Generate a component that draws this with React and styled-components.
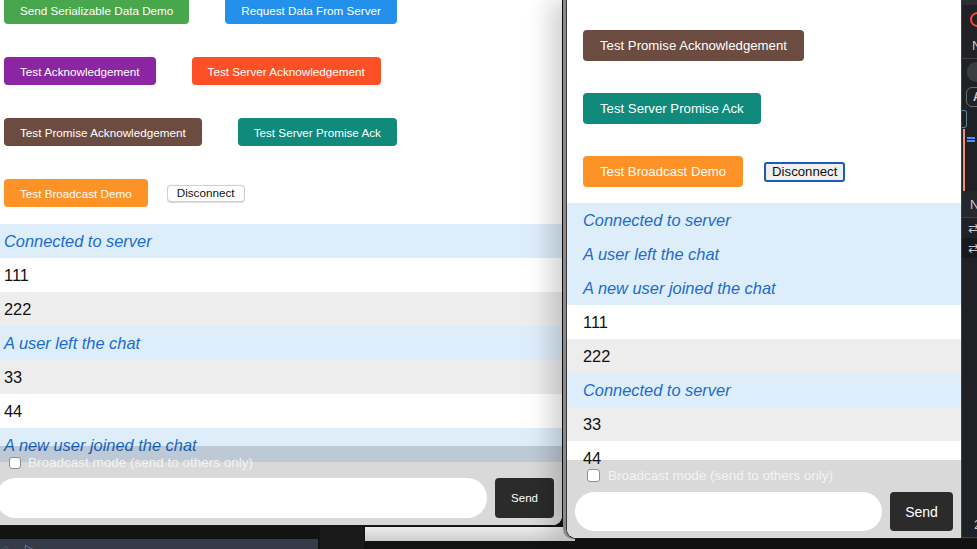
import React from 'react';
import styled, { createGlobalStyle } from 'styled-components';

const GlobalStyle = createGlobalStyle`
  html, body {
    margin: 0;
    padding: 0;
    overflow: hidden;
    background: #121212;
  }
  body {
    font-family: "Liberation Sans", Arial, sans-serif;
  }
`;

// sizes for the two browser windows (left one renders a bit smaller)
const sizes = {
  sm: {
    btnFont: 11.7, btnHeight: 28, btnPad: 16, rowGap: 33, controlsBottom: 17,
    discFont: 11.7, discHeight: 17, discPad: 9, discBorder: '1px solid #cfcfcf', discBg: '#fff', discRadius: 4,
    formTop: 11, box: 12, labelGap: 7, boxIndent: 13, inputGap: 9, inputHeight: 40, sendWidth: 59, sendFont: 11.5,
  },
  lg: {
    btnFont: 13.2, btnHeight: 31, btnPad: 17, rowGap: 32, controlsBottom: 16,
    discFont: 13.2, discHeight: 20, discPad: 6, discBorder: '2px solid #1b5cb8', discBg: '#efefef', discRadius: 3,
    formTop: 9, box: 13, labelGap: 8, boxIndent: 12, inputGap: 10, inputHeight: 39, sendWidth: 63, sendFont: 14,
  },
};

const Desktop = styled.div`
  position: relative;
  width: 977px;
  height: 549px;
  overflow: hidden;
  background: #121212;
`;

const BackWindow = styled.div`
  position: absolute;
  left: ${p => p.$left}px;
  top: ${p => p.$top}px;
  width: ${p => p.$width}px;
  height: ${p => p.$height}px;
  background: ${p => p.$bg};
  display: flex;
  align-items: flex-end;
  gap: 16px;
  padding-left: 2px;
  box-sizing: border-box;
  color: #8d94a3;
  font-size: 11px;
  line-height: 10px;
`;

const BrowserWindow = styled.div`
  position: absolute;
  left: ${p => p.$left}px;
  top: ${p => p.$top}px;
  width: ${p => p.$width}px;
  height: ${p => p.$height}px;
  z-index: ${p => p.$z};
  box-sizing: border-box;
  display: flex;
  overflow: hidden;
  background: #fff;
  border-right: ${p => (p.$front ? 'none' : '1px solid #111')};
  border-left: ${p => (p.$front ? '1px solid #3a3a3a' : 'none')};
  border-bottom: 1px solid #1a1a1a;
  border-radius: ${p => (p.$front ? '0 0 0 10px' : '0 0 10px 0')};
  box-shadow: ${p => (p.$front ? '-3px 0 0 #8a8a8a, -16px 0 24px rgba(0, 0, 0, 0.18)' : 'none')};
`;

const Page = styled.div`
  position: relative;
  width: ${p => (p.$width ? `${p.$width}px` : '100%')};
  flex-shrink: 0;
  height: 100%;
  padding-top: ${p => p.$offset}px;
  box-sizing: border-box;
  overflow: hidden;
  background: #fff;
`;

const Controls = styled.div`
  display: flex;
  flex-direction: column;
  gap: ${p => sizes[p.$size].rowGap}px;
  padding: 0 16px ${p => sizes[p.$size].controlsBottom}px;
`;

const ButtonRow = styled.div`
  display: flex;
  align-items: center;
  gap: ${p => p.$gap}px;
`;

const ActionButton = styled.button`
  height: ${p => sizes[p.$size].btnHeight}px;
  padding: 0 ${p => sizes[p.$size].btnPad}px;
  border: none;
  border-radius: 4px;
  background: ${p => p.$bg};
  color: #fff;
  font-family: inherit;
  font-size: ${p => sizes[p.$size].btnFont}px;
  white-space: nowrap;
  cursor: pointer;
`;

const DisconnectButton = styled.button`
  height: ${p => sizes[p.$size].discHeight}px;
  padding: 0 ${p => sizes[p.$size].discPad}px;
  border: ${p => sizes[p.$size].discBorder};
  border-radius: ${p => sizes[p.$size].discRadius}px;
  background: ${p => sizes[p.$size].discBg};
  color: #111;
  font-family: inherit;
  font-size: ${p => sizes[p.$size].discFont}px;
  line-height: 1;
  box-sizing: border-box;
  box-shadow: ${p => (p.$size === 'sm' ? '0 0.5px 1px rgba(0,0,0,0.15)' : 'none')};
`;

const MessageList = styled.ul`
  list-style: none;
  margin: 0;
  padding: 0;
`;

const Message = styled.li`
  height: 34px;
  line-height: 34px;
  padding: 0 16px;
  font-size: 16.4px;
  color: ${p => (p.$system ? '#1b6cd0' : '#111')};
  font-style: ${p => (p.$system ? 'italic' : 'normal')};
  background: ${p => (p.$system ? '#deedfa' : '#fff')};
  white-space: nowrap;

  &:nth-child(odd) {
    background: ${p => (p.$system ? '#deedfa' : '#ededed')};
  }
`;

const ChatForm = styled.form`
  position: absolute;
  left: 0;
  right: 0;
  bottom: 0;
  padding: ${p => sizes[p.$size].formTop}px 8px 7px;
  background: rgba(0, 0, 0, 0.15);
  display: flex;
  flex-direction: column;
  gap: ${p => sizes[p.$size].inputGap}px;
`;

const CheckRow = styled.label`
  display: flex;
  align-items: center;
  gap: ${p => sizes[p.$size].labelGap}px;
  height: ${p => sizes[p.$size].box}px;
  padding-left: ${p => sizes[p.$size].boxIndent}px;
  color: #f4f4f4;
  font-size: 13.5px;
  line-height: 1;
  white-space: nowrap;
`;

const CheckBox = styled.input`
  appearance: none;
  margin: 0;
  width: ${p => sizes[p.$size].box}px;
  height: ${p => sizes[p.$size].box}px;
  border: 1px solid #8f8f8f;
  border-radius: 3px;
  background: #fff;
  box-sizing: border-box;
`;

const InputRow = styled.div`
  display: flex;
  gap: 8px;
  height: ${p => sizes[p.$size].inputHeight}px;
`;

const TextInput = styled.input`
  flex: 1;
  min-width: 0;
  border: none;
  border-radius: 20px;
  background: #fff;
  outline: none;
`;

const SendButton = styled.button`
  width: ${p => sizes[p.$size].sendWidth}px;
  border: none;
  border-radius: 4px;
  background: #2b2b2b;
  color: #fff;
  font-family: inherit;
  font-size: ${p => sizes[p.$size].sendFont}px;
`;

/* devtools docked at the right edge of the front window */
const Devtools = styled.div`
  flex: 1;
  display: flex;
  flex-direction: column;
  background: #202124;
  border-left: 1px solid #3c4043;
  color: #c8cacc;
  font-size: 13px;
  overflow: hidden;
`;

const ToolRow = styled.div`
  height: ${p => p.$h}px;
  flex-shrink: 0;
  display: flex;
  align-items: center;
  padding-left: ${p => p.$pad || 0}px;
  background: ${p => p.$bg || 'transparent'};
  border-bottom: ${p => (p.$line ? '1px solid #3c4043' : 'none')};
  position: relative;
`;

const RecordDot = styled.span`
  width: 11px;
  height: 11px;
  border: 2px solid #ee4b3e;
  border-radius: 50%;
`;

const SearchPill = styled.span`
  width: 22px;
  height: 20px;
  border-radius: 10px;
  background: #3a3e43;
`;

const FilterChip = styled.span`
  padding: 2px 6px;
  border: 1px solid #6b6f74;
  border-radius: 6px;
  font-weight: bold;
  font-size: 12px;
`;

const Timeline = styled.div`
  height: 62px;
  flex-shrink: 0;
  margin-left: 1px;
  border-left: 2px solid #f28b82;
  position: relative;
`;

const TimelineBar = styled.span`
  display: block;
  width: 8px;
  height: 2px;
  margin: ${p => p.$top}px 0 0 2px;
  background: #4d8df5;
`;

const Handle = styled.span`
  width: 4px;
  height: 16px;
  border: 1px solid #5a8a9a;
  border-left: none;
  border-radius: 0 3px 3px 0;
`;

const Spacer = styled.div`
  flex: 1;
`;

const buttonRows = [
  [
    { label: 'Send Serializable Data Demo', bg: '#48a64c' },
    { label: 'Request Data From Server', bg: '#2391ec' },
  ],
  [
    { label: 'Test Acknowledgement', bg: '#8c25a1' },
    { label: 'Test Server Acknowledgement', bg: '#fd5027' },
  ],
  [
    { label: 'Test Promise Acknowledgement', bg: '#6c4b40' },
    { label: 'Test Server Promise Ack', bg: '#0f8a7b' },
  ],
];

const broadcast = { label: 'Test Broadcast Demo', bg: '#fd9226' };

const leftMessages = [
  { text: 'Connected to server', system: true },
  { text: '111' },
  { text: '222' },
  { text: 'A user left the chat', system: true },
  { text: '33' },
  { text: '44' },
  { text: 'A new user joined the chat', system: true },
];

const rightMessages = [
  { text: 'Connected to server', system: true },
  { text: 'A user left the chat', system: true },
  { text: 'A new user joined the chat', system: true },
  { text: '111' },
  { text: '222' },
  { text: 'Connected to server', system: true },
  { text: '33' },
  { text: '44' },
];

function ChatClient({ size, rows, messages }) {
  return (
    <>
      <Controls $size={size}>
        {rows.map((row, i) => (
          <ButtonRow key={i} $gap={36}>
            {row.map(b => (
              <ActionButton key={b.label} $size={size} $bg={b.bg}>{b.label}</ActionButton>
            ))}
          </ButtonRow>
        ))}
        <ButtonRow $gap={size === 'sm' ? 19 : 21}>
          <ActionButton $size={size} $bg={broadcast.bg}>{broadcast.label}</ActionButton>
          <DisconnectButton $size={size}>Disconnect</DisconnectButton>
        </ButtonRow>
      </Controls>
      <MessageList>
        {messages.map((m, i) => (
          <Message key={i} $system={m.system}>{m.text}</Message>
        ))}
      </MessageList>
      <ChatForm $size={size} onSubmit={e => e.preventDefault()}>
        <CheckRow $size={size}>
          <CheckBox type="checkbox" $size={size} />
          Broadcast mode (send to others only)
        </CheckRow>
        <InputRow $size={size}>
          <TextInput type="text" />
          <SendButton $size={size}>Send</SendButton>
        </InputRow>
      </ChatForm>
    </>
  );
}

export default function App() {
  return (
    <Desktop>
      <GlobalStyle />
      <BackWindow $left={0} $top={539} $width={318} $height={14} $bg="#353b49">
        <span>◌</span>
        <span>▷</span>
      </BackWindow>
      <BackWindow $left={320} $top={527} $width={44} $height={30} $bg="#1a1a1a" />
      <BackWindow $left={365} $top={527} $width={210} $height={14} $bg="linear-gradient(#ececec, #cdcdcd)" />

      <BrowserWindow $left={-12} $top={-4} $width={575} $height={530} $z={1}>
        <Page $offset={0}>
          <ChatClient size="sm" rows={buttonRows} messages={leftMessages} />
        </Page>
      </BrowserWindow>

      <BrowserWindow $front $left={566} $top={0} $width={420} $height={539} $z={2}>
        <Page $width={394} $offset={30}>
          <ChatClient size="lg" rows={[buttonRows[2].slice(0, 1), buttonRows[2].slice(1)]} messages={rightMessages} />
        </Page>
        <Devtools>
          <ToolRow $h={5} $bg="#2b2f33" />
          <ToolRow $h={28} $pad={8}><RecordDot /></ToolRow>
          <ToolRow $h={25} $pad={10} $line>N</ToolRow>
          <ToolRow $h={26} $pad={5}><SearchPill /></ToolRow>
          <ToolRow $h={24} $pad={4}><FilterChip>A</FilterChip></ToolRow>
          <ToolRow $h={20}><Handle /></ToolRow>
          <Timeline>
            <TimelineBar $top={8} />
            <TimelineBar $top={1} />
          </Timeline>
          <ToolRow $h={26} $pad={8} $bg="#25282b" $line>Na</ToolRow>
          <ToolRow $h={20} $pad={6}>⇄</ToolRow>
          <ToolRow $h={20} $pad={6} $bg="#17191b">⇄</ToolRow>
          <Spacer />
          <ToolRow $h={26} $pad={12} $line>2</ToolRow>
        </Devtools>
      </BrowserWindow>
    </Desktop>
  );
}
